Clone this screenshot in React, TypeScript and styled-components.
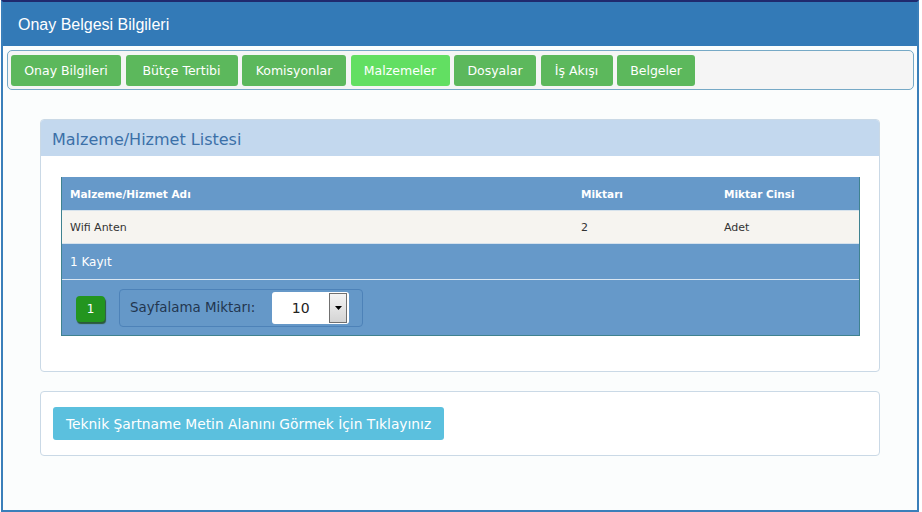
import styled, { createGlobalStyle } from 'styled-components';

const GlobalStyle = createGlobalStyle`
  body {
    margin: 0;
    background: #ffffff;
    font-family: "DejaVu Sans", Verdana, sans-serif;
  }
`;

const tabs = [
  { label: 'Onay Bilgileri', width: 110 },
  { label: 'Bütçe Tertibi', width: 112 },
  { label: 'Komisyonlar', width: 104 },
  { label: 'Malzemeler', width: 99 },
  { label: 'Dosyalar', width: 82 },
  { label: 'İş Akışı', width: 72 },
  { label: 'Belgeler', width: 78 },
];

const Window = styled.div`
  margin-left: 1px;
  width: 914px;
  height: 508px;
  border: 2px solid #3a7fba;
  border-top: 2px solid #202a6e;
  background: #fbfdfd;
  display: flex;
  flex-direction: column;
`;

const Header = styled.div`
  height: 44px;
  box-sizing: border-box;
  background: #337ab7;
  color: #ffffff;
  font-family: "Liberation Sans", Arial, sans-serif;
  font-size: 16px;
  display: flex;
  align-items: center;
  padding-left: 15px;
  padding-top: 2px;
`;

const TabBar = styled.div`
  margin: 4px 3px 0 4px;
  height: 37px;
  border: 1px solid #76a9c6;
  border-radius: 5px;
  background: #f5f5f5;
  display: flex;
  align-items: center;
  gap: 4.5px;
  padding: 1px 3px 0 3px;
`;

const Tab = styled.div<{ $active?: boolean; $width: number }>`
  width: ${(p) => p.$width}px;
  height: 31px;
  display: flex;
  align-items: center;
  justify-content: center;
  border-radius: 3px;
  background: ${(p) => (p.$active ? '#62df62' : '#5cb85c')};
  color: #ffffff;
  font-size: 12.5px;
`;

const Content = styled.div`
  flex: 1;
  padding: 29px 37px 0 37px;
  display: flex;
  flex-direction: column;
  gap: 19px;
`;

const Panel = styled.div`
  border: 1px solid #cad9e6;
  border-radius: 4px;
  background: #ffffff;
  overflow: hidden;
`;

const PanelHeading = styled.div`
  height: 36px;
  background: #c3d8ee;
  color: #3b70a8;
  font-size: 16px;
  display: flex;
  align-items: center;
  padding-left: 11px;
  padding-top: 2px;
  box-sizing: border-box;
`;

const PanelBody = styled.div<{ $pad: string }>`
  padding: ${(p) => p.$pad};
`;

const Grid = styled.div`
  border-left: 1px solid #3f8290;
  border-right: 1px solid #3f8290;
  border-bottom: 1px solid #3f8290;
  font-size: 11px;
`;

const Row = styled.div<{ $head?: boolean }>`
  display: grid;
  grid-template-columns: 511px 143px 1fr;
  height: ${(p) => (p.$head ? '33px' : '32px')};
  align-items: center;
  background: ${(p) => (p.$head ? '#6699c9' : '#f6f4f0')};
  color: ${(p) => (p.$head ? '#ffffff' : '#333333')};
  font-weight: ${(p) => (p.$head ? 'bold' : 'normal')};
  font-size: ${(p) => (p.$head ? '10.5px' : '11px')};
  border-bottom: 1px solid #d6e2ec;
`;

const Cell = styled.div`
  padding-left: 8px;
`;

const CountRow = styled.div`
  height: 35px;
  background: #6699c9;
  color: #ffffff;
  font-size: 12px;
  display: flex;
  align-items: center;
  padding-left: 8px;
  border-bottom: 1px solid #d9e6f2;
`;

const PagerRow = styled.div`
  height: 55px;
  background: #6699c9;
  display: flex;
  align-items: center;
  padding-left: 14px;
  gap: 14px;
`;

const PageButton = styled.div`
  width: 29px;
  height: 26px;
  border-radius: 4px;
  background: #23951f;
  box-shadow: 1px 2px 1px #2b5a3a;
  color: #ffffff;
  font-size: 12px;
  display: flex;
  align-items: center;
  justify-content: center;
  margin-top: 3px;
`;

const SizeBox = styled.div`
  height: 36px;
  width: 232px;
  border: 1px solid #4d82b8;
  border-radius: 4px;
  background: #6598c8;
  display: flex;
  align-items: center;
  padding-left: 10px;
  gap: 17px;
  color: #22364f;
  font-size: 13.4px;
`;

const Select = styled.div`
  width: 77px;
  height: 32px;
  background: #ffffff;
  border-radius: 3px;
  display: flex;
  align-items: center;
  color: #222222;
  font-size: 14px;
`;

const SelectValue = styled.div`
  flex: 1;
  text-align: center;
`;

const SelectArrow = styled.div`
  width: 16px;
  height: 28px;
  margin-right: 2px;
  border: 1px solid #707070;
  background: linear-gradient(#f4f4f4, #d4d4d4);
  display: flex;
  align-items: center;
  justify-content: center;
`;

const InfoButton = styled.div`
  display: inline-flex;
  align-items: center;
  height: 33px;
  padding: 0 13px;
  border-radius: 3px;
  background: #5bc0de;
  color: #ffffff;
  font-size: 13.8px;
`;

export default function App() {
  return (
    <>
      <GlobalStyle />
      <Window>
        <Header>Onay Belgesi Bilgileri</Header>
        <TabBar>
          {tabs.map((t) => (
            <Tab key={t.label} $width={t.width} $active={t.label === 'Malzemeler'}>
              {t.label}
            </Tab>
          ))}
        </TabBar>
        <Content>
          <Panel>
            <PanelHeading>Malzeme/Hizmet Listesi</PanelHeading>
            <PanelBody $pad="21px 19px 35px 20px">
              <Grid>
                <Row $head>
                  <Cell>Malzeme/Hizmet Adı</Cell>
                  <Cell>Miktarı</Cell>
                  <Cell>Miktar Cinsi</Cell>
                </Row>
                <Row>
                  <Cell>Wifi Anten</Cell>
                  <Cell>2</Cell>
                  <Cell>Adet</Cell>
                </Row>
                <CountRow>1 Kayıt</CountRow>
                <PagerRow>
                  <PageButton>1</PageButton>
                  <SizeBox>
                    Sayfalama Miktarı:
                    <Select>
                      <SelectValue>10</SelectValue>
                      <SelectArrow>
                        <svg width="7" height="4" viewBox="0 0 7 4">
                          <path d="M0 0h7L3.5 4z" fill="#000" />
                        </svg>
                      </SelectArrow>
                    </Select>
                  </SizeBox>
                </PagerRow>
              </Grid>
            </PanelBody>
          </Panel>
          <Panel>
            <PanelBody $pad="15px 12px 15px 12px">
              <InfoButton>Teknik Şartname Metin Alanını Görmek İçin Tıklayınız</InfoButton>
            </PanelBody>
          </Panel>
        </Content>
      </Window>
    </>
  );
}
